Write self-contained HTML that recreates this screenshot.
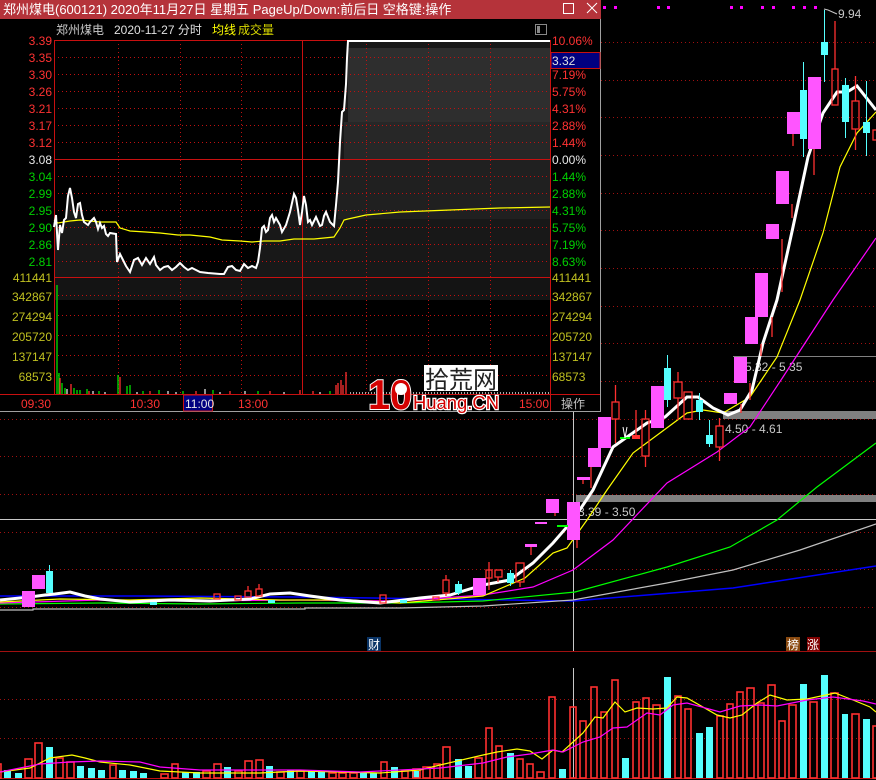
<!DOCTYPE html>
<html><head><meta charset="utf-8"><style>
html,body{margin:0;padding:0;background:#000;}
body{width:876px;height:780px;overflow:hidden;position:relative;font-family:"Liberation Sans","Noto Sans CJK SC",sans-serif;}
svg{position:absolute;left:0;top:0;}
svg text{font-family:"Liberation Sans","Noto Sans CJK SC",sans-serif;}
</style></head><body>
<svg width="876" height="780" viewBox="0 0 876 780" xmlns="http://www.w3.org/2000/svg">
<rect width="876" height="780" fill="#000"/>
<g stroke="#a01010" stroke-width="1" stroke-dasharray="1,3">
<line x1="601" y1="42.5" x2="876" y2="42.5"/><line x1="601" y1="80.5" x2="876" y2="80.5"/>
<line x1="601" y1="117.5" x2="876" y2="117.5"/><line x1="601" y1="155.5" x2="876" y2="155.5"/>
<line x1="601" y1="193.5" x2="876" y2="193.5"/><line x1="601" y1="230.5" x2="876" y2="230.5"/>
<line x1="601" y1="268.5" x2="876" y2="268.5"/><line x1="601" y1="306.5" x2="876" y2="306.5"/>
<line x1="601" y1="343.5" x2="876" y2="343.5"/><line x1="601" y1="381.5" x2="876" y2="381.5"/>
<line x1="0" y1="419.5" x2="876" y2="419.5"/><line x1="0" y1="456.5" x2="876" y2="456.5"/>
<line x1="0" y1="494.5" x2="876" y2="494.5"/><line x1="0" y1="532.5" x2="876" y2="532.5"/>
<line x1="0" y1="569.5" x2="876" y2="569.5"/><line x1="0" y1="607.5" x2="876" y2="607.5"/>
<line x1="0" y1="699.5" x2="876" y2="699.5"/><line x1="0" y1="738.5" x2="876" y2="738.5"/>
</g>
<line x1="0" y1="651.5" x2="876" y2="651.5" stroke="#a01010"/>
<line x1="0" y1="778.5" x2="876" y2="778.5" stroke="#c01010"/>
<g fill="#ff00ff"><rect x="603" y="6" width="3" height="3"/><rect x="614" y="6" width="3" height="3"/><rect x="657" y="6" width="3" height="3"/><rect x="667" y="6" width="3" height="3"/><rect x="730" y="6" width="3" height="3"/><rect x="740" y="6" width="3" height="3"/><rect x="761" y="6" width="3" height="3"/><rect x="772" y="6" width="3" height="3"/><rect x="792" y="6" width="3" height="3"/><rect x="803" y="6" width="3" height="3"/><rect x="814" y="6" width="3" height="3"/></g>
<rect x="723" y="411" width="153" height="8" fill="#808080"/>
<rect x="576" y="495" width="300" height="7" fill="#808080"/>
<line x1="733" y1="356.5" x2="876" y2="356.5" stroke="#808080"/>
<g fill="#c8c8c8" font-size="12"><text x="745" y="371">5.32 - 5.35</text><text x="725" y="433">4.50 - 4.61</text><text x="578" y="516">3.39 - 3.50</text><text x="838" y="18">9.94</text></g>
<polyline points="824,9 828,10 837,14" fill="none" stroke="#c8c8c8"/>
<line x1="0" y1="519.5" x2="876" y2="519.5" stroke="#c8c8c8"/>
<line x1="573.5" y1="412" x2="573.5" y2="651" stroke="#c8c8c8"/>
<line x1="573.5" y1="668" x2="573.5" y2="778" stroke="#c8c8c8"/>
<polyline fill="none" stroke="#0000ff" stroke-width="1.5" points="0,596 140,596 300,597 440,599 573,601 733,588 876,566"/>
<polyline fill="none" stroke="#c0c0c0" stroke-width="1.2" points="0,610 33,610 33,609 305,609 305,608 400,608 483,606 573,600 667,583 733,570 800,550 876,524"/>
<polyline fill="none" stroke="#00ff00" stroke-width="1.2" points="0,604 100,603 200,604 300,603 400,603 483,601 575,592 667,567 730,547 777,520 817,487 876,443"/>
<polyline fill="none" stroke="#ff00ff" stroke-width="1.2" points="0,603 100,600 200,601 300,600 400,601 483,595 533,587 573,570 613,540 667,483 717,452 750,427 783,377 833,300 876,238"/>
<polyline fill="none" stroke="#ffff00" stroke-width="1.2" points="0,602 60,599 130,600 200,598 280,600 350,600 400,603 483,596 525,578 553,553 567,548 587,520 607,490 633,453 660,433 687,413 703,410 723,413 750,397 777,357 800,300 823,233 840,167 857,133 876,112"/>
<polyline fill="none" stroke="#fff" stroke-width="3" points="0,600 30,597 45,595 55,594 70,592 85,596 100,599 130,602 170,600 210,601 250,599 270,594 290,593 310,596 340,600 380,603 420,598 450,595 483,585 510,580 533,563 553,543 573,520 593,490 613,447 627,437 647,423 665,417 687,397 698,397 713,408 728,415 740,410 752,390 763,343 777,300 793,227 808,157 823,113 837,92 847,92 857,86 876,110"/>
<rect x="22" y="591" width="13" height="16" fill="#ff55ff"/>
<rect x="32" y="575" width="13" height="14" fill="#ff55ff"/>
<line x1="49.5" y1="565" x2="49.5" y2="593" stroke="#55ffff"/><rect x="46" y="571" width="7" height="22" fill="#55ffff"/>
<g fill="none" stroke="#ff3030" stroke-width="1.3">
<rect x="214" y="594" width="6" height="5"/><rect x="235" y="596" width="6" height="4"/><rect x="245" y="591" width="6" height="6"/><rect x="256" y="589" width="6" height="7"/>
<rect x="380" y="595" width="6" height="8"/><rect x="433" y="597" width="6" height="3"/><rect x="443" y="580" width="6" height="13"/>
<rect x="486" y="570" width="6" height="8"/><rect x="495" y="570" width="7" height="7"/><rect x="516" y="563" width="8" height="19"/>
<rect x="612" y="402" width="7" height="17"/><rect x="642" y="419" width="7" height="37"/><rect x="674" y="382" width="8" height="16"/><rect x="684" y="392" width="8" height="27"/><rect x="716" y="426" width="7" height="21"/>
<rect x="832" y="69" width="6" height="36"/><rect x="852" y="101" width="7" height="28"/><rect x="873" y="130" width="5" height="10"/>
</g>
<g stroke="#ff3030" stroke-width="1.3">
<line x1="248" y1="586" x2="248" y2="591"/><line x1="259" y1="584" x2="259" y2="589"/><line x1="446" y1="575" x2="446" y2="580"/><line x1="446" y1="593" x2="446" y2="596"/>
<line x1="489" y1="562" x2="489" y2="590"/><line x1="498" y1="577" x2="498" y2="582"/><line x1="520" y1="582" x2="520" y2="587"/>
<line x1="615.5" y1="385" x2="615.5" y2="402"/><line x1="615.5" y1="419" x2="615.5" y2="443"/>
<line x1="645.5" y1="410" x2="645.5" y2="419"/><line x1="645.5" y1="456" x2="645.5" y2="467"/>
<line x1="678" y1="372" x2="678" y2="382"/><line x1="678" y1="398" x2="678" y2="420"/>
<line x1="719.5" y1="418" x2="719.5" y2="426"/><line x1="719.5" y1="447" x2="719.5" y2="461"/>
<line x1="835" y1="21" x2="835" y2="69"/><line x1="855.5" y1="76" x2="855.5" y2="101"/><line x1="855.5" y1="129" x2="855.5" y2="150"/>
<line x1="636" y1="410" x2="636" y2="438"/><line x1="591" y1="467" x2="591" y2="488"/><line x1="741" y1="404" x2="741" y2="413"/><line x1="750" y1="383" x2="750" y2="400"/><line x1="761" y1="344" x2="761" y2="356"/><line x1="772" y1="317" x2="772" y2="337"/><line x1="782" y1="239" x2="782" y2="292"/><line x1="792" y1="204" x2="792" y2="218"/><line x1="793" y1="134" x2="793" y2="146"/><line x1="814" y1="149" x2="814" y2="175"/><line x1="531" y1="545" x2="531" y2="555"/><line x1="577" y1="540" x2="577" y2="548"/><line x1="555" y1="512" x2="555" y2="516"/><line x1="583" y1="477" x2="583" y2="484"/>
</g>
<rect x="632" y="435" width="8" height="4" fill="#ff3030"/>
<g fill="#ff55ff">
<rect x="473" y="578" width="13" height="17"/><rect x="525" y="544" width="12" height="3"/><rect x="546" y="499" width="13" height="14"/><rect x="567" y="502" width="13" height="38"/>
<rect x="577" y="477" width="13" height="3"/><rect x="588" y="448" width="13" height="19"/><rect x="598" y="417" width="13" height="31"/>
<rect x="651" y="386" width="13" height="42"/><rect x="724" y="393" width="13" height="11"/><rect x="734" y="357" width="13" height="26"/><rect x="745" y="317" width="13" height="27"/><rect x="755" y="273" width="13" height="44"/>
<rect x="766" y="224" width="13" height="15"/><rect x="776" y="171" width="13" height="33"/><rect x="787" y="112" width="13" height="22"/><rect x="808" y="77" width="13" height="72"/>
<rect x="535" y="522" width="12" height="2"/>
</g>
<rect x="557" y="525" width="11" height="2" fill="#00ff00"/><rect x="620" y="437" width="10" height="2" fill="#00ff00"/>
<polyline points="623,427 625,438 627,427" fill="none" stroke="#fff"/>
<g stroke="#55ffff"><line x1="458.5" y1="581" x2="458.5" y2="595"/><line x1="510.5" y1="570" x2="510.5" y2="586"/><line x1="667.5" y1="355" x2="667.5" y2="407"/><line x1="699.5" y1="393" x2="699.5" y2="420"/><line x1="709.5" y1="420" x2="709.5" y2="447"/><line x1="803.5" y1="62" x2="803.5" y2="157"/><line x1="824.5" y1="10" x2="824.5" y2="82"/><line x1="845.5" y1="78" x2="845.5" y2="138"/><line x1="866.5" y1="81" x2="866.5" y2="156"/></g>
<g fill="#55ffff"><rect x="455" y="584" width="7" height="9"/><rect x="507" y="573" width="7" height="10"/><rect x="664" y="368" width="7" height="32"/><rect x="696" y="400" width="7" height="12"/><rect x="706" y="435" width="7" height="9"/><rect x="800" y="90" width="7" height="49"/><rect x="821" y="42" width="7" height="13"/><rect x="842" y="85" width="7" height="37"/><rect x="863" y="122" width="7" height="11"/><rect x="268" y="600" width="7" height="3"/><rect x="150" y="602" width="7" height="3"/><rect x="400" y="600" width="7" height="3"/></g>
<rect x="367" y="637" width="14" height="14" fill="#0a3466"/><text x="368" y="649" font-size="12" fill="#fff">财</text>
<rect x="786" y="637" width="14" height="14" fill="#8a4a10"/><text x="787" y="649" font-size="12" fill="#fff">榜</text>
<rect x="807" y="637" width="13" height="14" fill="#800000"/><text x="807" y="649" font-size="12" fill="#fff">涨</text>
<g fill="#55ffff">
<rect x="4" y="770" width="7" height="8"/><rect x="15" y="773" width="7" height="5"/><rect x="46" y="747" width="7" height="31"/><rect x="77" y="766" width="7" height="12"/><rect x="88" y="768" width="7" height="10"/><rect x="98" y="770" width="7" height="8"/><rect x="119" y="770" width="7" height="8"/><rect x="130" y="771" width="7" height="7"/><rect x="140" y="773" width="7" height="5"/><rect x="182" y="772" width="7" height="6"/><rect x="193" y="772" width="7" height="6"/><rect x="224" y="767" width="7" height="11"/><rect x="266" y="766" width="7" height="12"/><rect x="287" y="770" width="7" height="8"/><rect x="308" y="771" width="7" height="7"/><rect x="318" y="772" width="7" height="6"/><rect x="360" y="773" width="7" height="5"/><rect x="370" y="773" width="7" height="5"/><rect x="391" y="767" width="7" height="11"/><rect x="412" y="771" width="7" height="7"/>
<rect x="455" y="759" width="7" height="19"/><rect x="465" y="766" width="7" height="12"/><rect x="507" y="753" width="7" height="25"/><rect x="559" y="769" width="7" height="9"/><rect x="622" y="758" width="7" height="20"/><rect x="664" y="677" width="7" height="101"/><rect x="696" y="733" width="7" height="45"/><rect x="706" y="727" width="7" height="51"/><rect x="800" y="684" width="7" height="94"/><rect x="821" y="675" width="7" height="103"/><rect x="842" y="714" width="6" height="64"/><rect x="863" y="719" width="7" height="59"/>
</g>
<g fill="none" stroke="#ff3030" stroke-width="1.6">
<rect x="-2" y="764" width="3" height="14"/><rect x="25" y="759" width="7" height="19"/><rect x="35" y="743" width="7" height="35"/><rect x="56" y="758" width="7" height="20"/><rect x="67" y="762" width="7" height="16"/><rect x="110" y="765" width="6" height="13"/><rect x="161" y="774" width="7" height="4"/><rect x="172" y="764" width="6" height="14"/><rect x="203" y="771" width="7" height="7"/><rect x="214" y="764" width="7" height="14"/><rect x="235" y="771" width="7" height="7"/><rect x="245" y="761" width="7" height="17"/><rect x="256" y="760" width="7" height="18"/><rect x="277" y="772" width="7" height="6"/><rect x="297" y="771" width="7" height="7"/><rect x="329" y="773" width="7" height="5"/><rect x="339" y="773" width="7" height="5"/><rect x="350" y="773" width="7" height="5"/><rect x="381" y="762" width="6" height="16"/><rect x="402" y="771" width="6" height="7"/><rect x="413" y="769" width="7" height="9"/><rect x="423" y="767" width="7" height="11"/><rect x="434" y="764" width="6" height="14"/>
<rect x="443" y="747" width="7" height="31"/><rect x="475" y="758" width="7" height="20"/><rect x="486" y="728" width="6" height="50"/><rect x="496" y="746" width="6" height="32"/><rect x="517" y="759" width="6" height="19"/><rect x="527" y="764" width="6" height="14"/><rect x="537" y="772" width="7" height="6"/><rect x="549" y="697" width="6" height="81"/><rect x="570" y="707" width="6" height="71"/><rect x="580" y="721" width="6" height="57"/><rect x="591" y="687" width="6" height="91"/><rect x="601" y="712" width="6" height="66"/><rect x="612" y="680" width="6" height="98"/><rect x="633" y="702" width="6" height="76"/><rect x="643" y="698" width="6" height="80"/><rect x="653" y="705" width="7" height="73"/><rect x="675" y="696" width="6" height="82"/><rect x="685" y="709" width="6" height="69"/><rect x="717" y="716" width="6" height="62"/><rect x="727" y="704" width="6" height="74"/><rect x="737" y="692" width="6" height="86"/><rect x="747" y="688" width="7" height="90"/><rect x="758" y="703" width="6" height="75"/><rect x="768" y="685" width="7" height="93"/><rect x="779" y="721" width="6" height="57"/><rect x="789" y="705" width="7" height="73"/><rect x="810" y="702" width="7" height="76"/><rect x="831" y="693" width="7" height="85"/><rect x="852" y="714" width="7" height="64"/><rect x="873" y="726" width="6" height="52"/>
</g>
<polyline fill="none" stroke="#ffff00" stroke-width="1.2" points="0,772 30,768 50,758 72,755 85,758 100,762 130,765 160,771 200,773 260,773 300,771 380,773 420,770 440,765 483,755 497,752 517,749 530,751 542,759 553,750 562,752 583,733 595,717 603,718 615,702 625,712 637,708 653,709 667,708 677,697 687,698 717,715 730,718 742,715 757,703 770,695 787,700 807,699 835,693 853,700 870,707 876,712"/>
<polyline fill="none" stroke="#ff00ff" stroke-width="1.2" points="0,772 40,764 70,762 100,761 140,762 160,767 200,770 300,770 360,772 440,768 483,763 507,757 530,754 553,750 563,752 583,742 600,737 613,728 627,727 647,713 660,715 673,705 687,703 720,712 740,706 760,705 777,706 807,700 833,697 863,701 876,704"/>

<rect x="0" y="0" width="601" height="412" fill="#000"/>
<rect x="0" y="0" width="601" height="19" fill="#b5333a"/>
<text x="3" y="14" font-size="13" fill="#fff">郑州煤电(600121) 2020年11月27日 星期五 PageUp/Down:前后日 空格键:操作</text>
<rect x="563.5" y="3.5" width="10" height="10" fill="none" stroke="#fff"/>
<path d="M587 3 L597 13 M597 3 L587 13" stroke="#fff" stroke-width="1"/>
<line x1="600.5" y1="19" x2="600.5" y2="412" stroke="#a0a0a0"/>
<line x1="0" y1="411.5" x2="601" y2="411.5" stroke="#a0a0a0"/>
<text x="56" y="34" font-size="12" fill="#c8c8c8">郑州煤电</text>
<text x="114" y="34" font-size="12" fill="#e0e0e0">2020-11-27 分时</text>
<text x="212" y="34" font-size="12" fill="#ffff00">均线</text>
<text x="238" y="34" font-size="12" fill="#d8d800">成交量</text>
<rect x="535.5" y="24.5" width="11" height="10" fill="none" stroke="#888"/><rect x="537" y="26" width="3" height="7" fill="#888"/>
<polygon fill="#181818" points="54,227 56,215 58,250 60,225 62,233 64,220 66,218 68,196 70,188 72,198 74,212 76,218 78,204 80,203 82,215 84,222 88,225 90,222 94,218 96,222 98,229 100,223 102,228 104,226 106,234 108,236 110,233 116,234 117,262 120,254 122,258 126,266 130,272 134,260 138,258 142,265 146,258 150,264 154,257 156,265 160,270 164,267 168,266 172,270 176,267 180,263 184,267 188,270 192,268 196,270 200,272 208,273 220,274 224,274 228,267 232,266 236,270 240,271 244,264 248,268 252,266 256,268 258,262 260,248 262,228 264,226 266,232 268,230 270,218 272,215 274,222 276,218 280,225 282,232 286,225 290,212 294,194 296,198 298,210 300,225 302,212 304,196 306,205 308,222 310,220 312,225 316,217 320,226 322,225 324,216 326,212 330,222 334,226 336,205 338,182 340,142 342,112 344,110 346,84 347,58 348,40 550,40 550,300 54,300"/>
<rect x="348" y="48" width="202" height="74" fill="#2e2e2e"/>
<rect x="344" y="122" width="206" height="37" fill="#272727"/>
<rect x="338" y="159" width="212" height="60" fill="#202020"/>
<rect x="54" y="277" width="496" height="23" fill="#141414"/>
<g stroke="#c01010" stroke-width="1" stroke-dasharray="1,3">
<line x1="54" y1="57.5" x2="550" y2="57.5"/><line x1="54" y1="74.5" x2="550" y2="74.5"/><line x1="54" y1="91.5" x2="550" y2="91.5"/><line x1="54" y1="108.5" x2="550" y2="108.5"/><line x1="54" y1="125.5" x2="550" y2="125.5"/><line x1="54" y1="142.5" x2="550" y2="142.5"/>
<line x1="54" y1="176.5" x2="550" y2="176.5"/><line x1="54" y1="193.5" x2="550" y2="193.5"/><line x1="54" y1="210.5" x2="550" y2="210.5"/><line x1="54" y1="227.5" x2="550" y2="227.5"/><line x1="54" y1="244.5" x2="550" y2="244.5"/><line x1="54" y1="261.5" x2="550" y2="261.5"/>
<line x1="54" y1="295.5" x2="550" y2="295.5"/><line x1="54" y1="315.5" x2="550" y2="315.5"/><line x1="54" y1="335.5" x2="550" y2="335.5"/><line x1="54" y1="355.5" x2="550" y2="355.5"/><line x1="54" y1="375.5" x2="550" y2="375.5"/>
<line x1="118.5" y1="40" x2="118.5" y2="395"/><line x1="180.5" y1="40" x2="180.5" y2="395"/><line x1="241.5" y1="40" x2="241.5" y2="395"/><line x1="366.5" y1="40" x2="366.5" y2="395"/><line x1="428.5" y1="40" x2="428.5" y2="395"/><line x1="490.5" y1="40" x2="490.5" y2="395"/>
</g>
<g stroke="#c81010" stroke-width="1" fill="none">
<rect x="54.5" y="40.5" width="496" height="354"/>
<line x1="54" y1="159.5" x2="550" y2="159.5"/><line x1="54" y1="277.5" x2="550" y2="277.5"/><line x1="302.5" y1="40" x2="302.5" y2="395"/>
<line x1="0" y1="394.5" x2="600" y2="394.5"/>
</g>
<polyline fill="none" stroke="#ffff00" stroke-width="1.2" points="54,220 58,223 70,221 80,220 100,222 116,222 120,228 130,231 146,232 160,233 178,235 190,235 210,237 222,240 240,241 252,242 264,241 280,241 294,239 314,239 334,237 340,228 344,220 348,219 366,215 400,212 450,210 500,208 550,207"/>
<polyline fill="none" stroke="#fff" stroke-width="2" points="54,227 56,215 58,250 60,225 62,233 64,220 66,218 68,196 70,188 72,198 74,212 76,218 78,204 80,203 82,215 84,222 88,225 90,222 94,218 96,222 98,229 100,223 102,228 104,226 106,234 108,236 110,233 116,234 117,262 120,254 122,258 126,266 130,272 134,260 138,258 142,265 146,258 150,264 154,257 156,265 160,270 164,267 168,266 172,270 176,267 180,263 184,267 188,270 192,268 196,270 200,272 208,273 220,274 224,274 228,267 232,266 236,270 240,271 244,264 248,268 252,266 256,268 258,262 260,248 262,228 264,226 266,232 268,230 270,218 272,215 274,222 276,218 280,225 282,232 286,225 290,212 294,194 296,198 298,210 300,225 302,212 304,196 306,205 308,222 310,220 312,225 316,217 320,226 322,225 324,216 326,212 330,222 334,226 336,205 338,182 340,142 342,112 344,110 346,84 347,58 348,41 550,41"/>
<g stroke="#00e000" stroke-width="1.3">
<line x1="57" y1="285" x2="57" y2="394"/><line x1="59" y1="373" x2="59" y2="394"/><line x1="62" y1="383" x2="62" y2="394"/><line x1="65" y1="388" x2="65" y2="394"/><line x1="74" y1="388" x2="74" y2="394"/><line x1="77" y1="390" x2="77" y2="394"/><line x1="80" y1="390" x2="80" y2="394"/><line x1="87" y1="389" x2="87" y2="394"/><line x1="99" y1="391" x2="99" y2="394"/><line x1="118" y1="375" x2="118" y2="394"/><line x1="127" y1="386" x2="127" y2="394"/><line x1="130" y1="385" x2="130" y2="394"/><line x1="143" y1="391" x2="143" y2="394"/><line x1="159" y1="390" x2="159" y2="394"/><line x1="183" y1="391" x2="183" y2="394"/><line x1="213" y1="390" x2="213" y2="394"/><line x1="258" y1="391" x2="258" y2="394"/><line x1="330" y1="391" x2="330" y2="394"/>
</g>
<g stroke="#ff3030" stroke-width="1.3">
<line x1="60" y1="378" x2="60" y2="394"/><line x1="71" y1="384" x2="71" y2="394"/><line x1="89" y1="391" x2="89" y2="394"/><line x1="120" y1="377" x2="120" y2="394"/><line x1="150" y1="391" x2="150" y2="394"/><line x1="196" y1="391" x2="196" y2="394"/><line x1="230" y1="391" x2="230" y2="394"/><line x1="270" y1="391" x2="270" y2="394"/><line x1="336" y1="385" x2="336" y2="394"/><line x1="338" y1="383" x2="338" y2="394"/><line x1="341" y1="380" x2="341" y2="394"/><line x1="343" y1="385" x2="343" y2="394"/><line x1="346" y1="372" x2="346" y2="394"/><line x1="300" y1="390" x2="300" y2="394"/><line x1="313" y1="391" x2="313" y2="394"/>
</g>
<g stroke="#e0e0e0" stroke-width="1.3">
<line x1="67" y1="389" x2="67" y2="394"/><line x1="93" y1="391" x2="93" y2="394"/><line x1="105" y1="392" x2="105" y2="394"/><line x1="137" y1="392" x2="137" y2="394"/><line x1="168" y1="391" x2="168" y2="394"/><line x1="176" y1="392" x2="176" y2="394"/><line x1="205" y1="389" x2="205" y2="394"/><line x1="220" y1="392" x2="220" y2="394"/><line x1="245" y1="391" x2="245" y2="394"/><line x1="284" y1="392" x2="284" y2="394"/><line x1="320" y1="392" x2="320" y2="394"/>
</g>
<line x1="350" y1="393" x2="550" y2="393" stroke="#e0e0e0" stroke-width="1.5" stroke-dasharray="1,2"/>
<g font-size="12" text-anchor="end">
<g fill="#ff3232"><text x="52" y="45">3.39</text><text x="52" y="62">3.35</text><text x="52" y="79">3.30</text><text x="52" y="96">3.26</text><text x="52" y="113">3.21</text><text x="52" y="130">3.17</text><text x="52" y="147">3.12</text></g>
<text x="52" y="164" fill="#e8e8e8">3.08</text>
<g fill="#00d000"><text x="52" y="181">3.04</text><text x="52" y="198">2.99</text><text x="52" y="215">2.95</text><text x="52" y="232">2.90</text><text x="52" y="249">2.86</text><text x="52" y="266">2.81</text></g>
<g fill="#c0c020"><text x="52" y="282">411441</text><text x="52" y="301">342867</text><text x="52" y="321">274294</text><text x="52" y="341">205720</text><text x="52" y="361">137147</text><text x="52" y="381">68573</text></g>
</g>
<g font-size="12">
<g fill="#ff3232"><text x="552" y="45">10.06%</text><text x="552" y="79">7.19%</text><text x="552" y="96">5.75%</text><text x="552" y="113">4.31%</text><text x="552" y="130">2.88%</text><text x="552" y="147">1.44%</text></g>
<text x="552" y="164" fill="#e8e8e8">0.00%</text>
<g fill="#00d000"><text x="552" y="181">1.44%</text><text x="552" y="198">2.88%</text><text x="552" y="215">4.31%</text><text x="552" y="232">5.75%</text><text x="552" y="249">7.19%</text><text x="552" y="266">8.63%</text></g>
<g fill="#c0c020"><text x="552" y="282">411441</text><text x="552" y="301">342867</text><text x="552" y="321">274294</text><text x="552" y="341">205720</text><text x="552" y="361">137147</text><text x="552" y="381">68573</text></g>
</g>
<rect x="551" y="52.5" width="49" height="16" fill="#000080" stroke="#c81010"/>
<text x="552" y="65" font-size="12" fill="#e0e0e0">3.32</text>
<g font-size="12" fill="#ff3232"><text x="21" y="408">09:30</text><text x="130" y="408">10:30</text><text x="238" y="408">13:00</text><text x="519" y="408">15:00</text></g>
<rect x="183.5" y="395" width="29" height="16" fill="#000080" stroke="#c81010"/>
<text x="185" y="408" font-size="12" fill="#e8e8e8">11:00</text>
<line x1="550.5" y1="395" x2="550.5" y2="411" stroke="#c81010"/>
<text x="561" y="408" font-size="12" fill="#c0c0c0">操作</text>
<g>
<text x="368" y="409" font-size="42" font-weight="bold" fill="#d40000" stroke="#fff" stroke-width="2" paint-order="stroke" textLength="44" lengthAdjust="spacingAndGlyphs">10</text>
<circle cx="401" cy="389" r="6" fill="#fff"/>
<rect x="424" y="365" width="74" height="26" fill="#fff"/>
<text x="425" y="388" font-size="24" fill="#222">拾荒网</text>
<text x="413" y="409" font-size="18" fill="#d40000" stroke="#fff" stroke-width="2.5" paint-order="stroke" textLength="86" lengthAdjust="spacingAndGlyphs">Huang.CN</text>
</g>
</svg>
</body></html>
